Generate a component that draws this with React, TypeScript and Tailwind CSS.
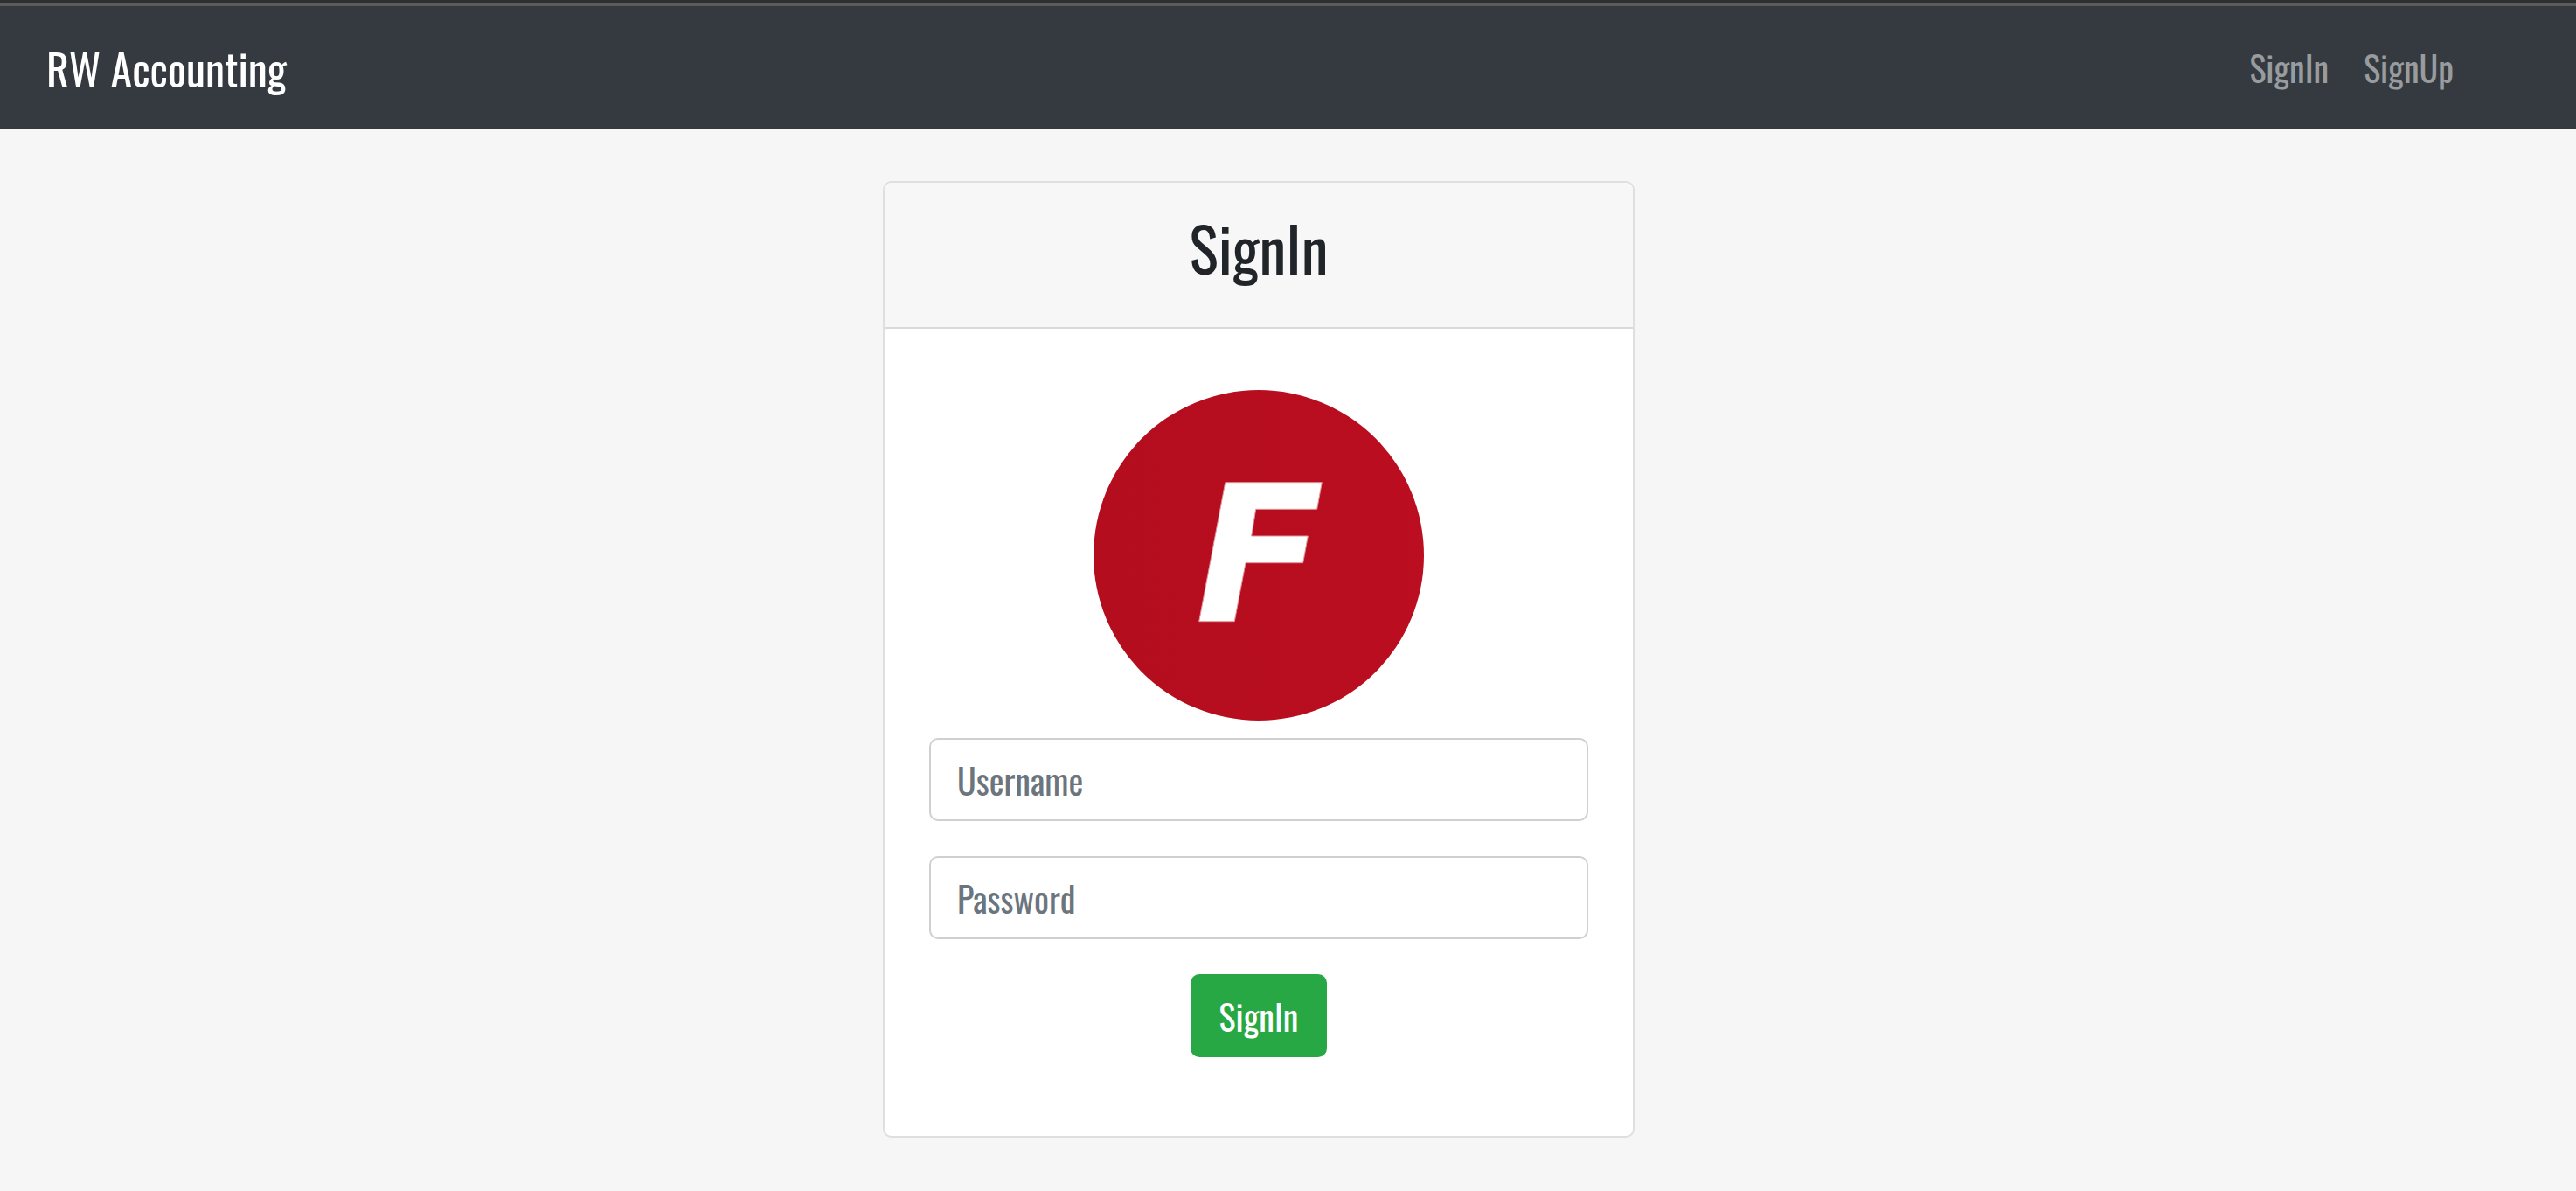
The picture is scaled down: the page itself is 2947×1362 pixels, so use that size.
import type { InputHTMLAttributes } from "react";

function Navbar() {
  return (
    <nav className="flex items-center justify-between bg-[#343a40] py-5 pr-[120px] pl-[53px]">
      <a href="#" className="py-3 text-[50px] leading-[76px] text-white">
        RW Accounting
      </a>
      <div className="flex text-[40px] leading-[60px] text-[#999c9f]">
        <a href="#signin" className="px-5 py-5">
          SignIn
        </a>
        <a href="#signup" className="px-5 py-5">
          SignUp
        </a>
      </div>
    </nav>
  );
}

function Logo() {
  return (
    <svg viewBox="0 0 378 378" className="size-[378px]" role="img" aria-label="Logo">
      <defs>
        <linearGradient id="disc" x1="0" x2="1" y1="0" y2="0">
          <stop offset="0" stopColor="#b30d1e" />
          <stop offset="1" stopColor="#bb0e20" />
        </linearGradient>
      </defs>
      <circle cx="189" cy="189" r="189" fill="url(#disc)" />
      <path
        d="M150.700 105.700H261.300L255.700 136.300H185.700L180.700 167H245.300L239.700 197.700H174L161.300 264.700H120.700Z"
        fill="#fff"
        stroke="#e2949c"
        strokeWidth="1"
      />
    </svg>
  );
}

function Field(props: InputHTMLAttributes<HTMLInputElement>) {
  return (
    <input
      {...props}
      aria-label={props.placeholder}
      className="h-[95px] w-full rounded-[10px] border-2 border-[#ced0d2] bg-white px-[30px] text-[40px] text-[#495057] placeholder:text-[#6c757d] placeholder:opacity-100"
    />
  );
}

export default function App() {
  return (
    <div className="min-h-screen bg-[#f6f6f6] font-['Oswald','Roboto_Condensed',sans-serif] font-normal">
      <div className="h-1 bg-[#2e2f31]" />
      <div className="h-[3px] bg-[#5c5c5d]" />
      <Navbar />
      <main className="flex justify-center pt-[60px] pr-[67px]">
        <section className="w-full max-w-[860px] overflow-hidden rounded-[10px] border-2 border-[#dfdfdf] bg-white">
          <header className="border-b-2 border-[#d9d9d9] bg-[#f7f7f7] px-[50px] pt-[31px] pb-[50px]">
            <h3 className="text-center text-[70px] leading-[84px] text-[#212529]">SignIn</h3>
          </header>
          <form className="flex flex-col items-center gap-10 px-[51px] pt-[70px] pb-[90px]" onSubmit={(e) => e.preventDefault()}>
            <div className="flex w-full flex-col items-center gap-5">
              <Logo />
              <Field type="text" placeholder="Username" />
            </div>
            <Field type="password" placeholder="Password" />
            <button
              type="submit"
              className="h-[95px] rounded-[10px] border-2 border-[#28a745] bg-[#28a745] px-[31px] text-[40px] text-white"
            >
              SignIn
            </button>
          </form>
        </section>
      </main>
    </div>
  );
}
